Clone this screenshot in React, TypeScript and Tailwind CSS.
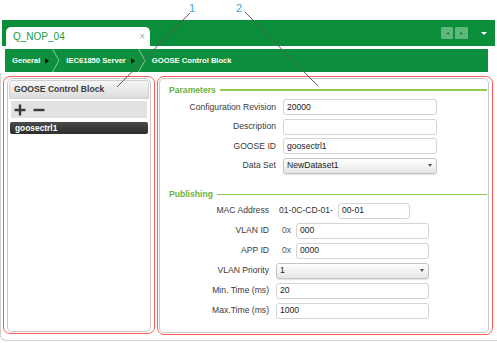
import React from 'react';

const font = "font-['Liberation_Sans',Arial,sans-serif]";

const Field: React.FC<{ value?: string; w: string }> = ({ value = '', w }) => (
  <div className={`${w} h-[16px] border border-[#d4d4d4] rounded-[3px] bg-white pl-[3px] flex items-center text-[8.6px] text-[#222]`}>
    {value}
  </div>
);

const Select: React.FC<{ value: string; w: string }> = ({ value, w }) => (
  <div className={`${w} h-[16px] border border-[#c4c4c4] rounded-[3px] bg-gradient-to-b from-white to-[#e6e6e6] pl-[3px] pr-[4px] flex items-center justify-between text-[8.6px] text-[#222] shadow-[0_1px_1px_rgba(0,0,0,0.12)]`}>
    <span>{value}</span>
    <span className="w-0 h-0 border-l-[2.5px] border-r-[2.5px] border-t-[3px] border-l-transparent border-r-transparent border-t-[#555]"></span>
  </div>
);

const Legend: React.FC<{ title: string }> = ({ title }) => (
  <div className="h-[10px] flex items-center pl-[9px] pr-[1px]">
    <span className="text-[8.6px] font-bold text-[#6bb33b]">{title}</span>
    <div className="flex-1 h-[1.5px] bg-[#8fca4f] ml-[4px]"></div>
  </div>
);

const Crumb: React.FC<{ label: string; last?: boolean }> = ({ label, last }) => (
  <div className="flex items-center h-full">
    <span className="text-[7.6px] font-bold text-white">{label}</span>
    {!last && (
      <>
        <span className="ml-[5px] w-0 h-0 border-t-[3.5px] border-b-[3.5px] border-l-[4px] border-t-transparent border-b-transparent border-l-[#111]"></span>
        <svg width="9" height="23" className="ml-[3px] mr-[5px]">
          <polyline points="0.5,0 7,11.5 0.5,23" fill="none" stroke="#7fcf93" strokeWidth="1" />
        </svg>
      </>
    )}
  </div>
);

const App: React.FC = () => {
  return (
    <div className={`relative w-[497px] h-[343px] bg-white overflow-hidden ${font}`}>
      {/* callout numbers */}
      <div className="h-[20px]"></div>

      {/* tab bar */}
      <div className="mx-[2px] h-[26px] bg-[#0a8e39] flex items-end justify-between pl-[4px] pr-[8px]">
        <div className="w-[144px] h-[19px] bg-white rounded-t-[5px] flex items-center justify-between pl-[7px] pr-[5px]">
          <span className="text-[10px] text-[#1b9a3e]">Q_NOP_04</span>
          <span className="text-[10px] text-[#aaa]">×</span>
        </div>
        <div className="self-center flex items-center gap-[2px]">
          <div className="w-[12px] h-[12px] bg-[#5fb87b] rounded-[1px] flex items-center justify-center text-[6px] text-[#2d7d44]">◂</div>
          <div className="w-[13px] h-[12px] bg-[#5fb87b] rounded-[1px] flex items-center justify-center text-[6px] text-[#2d7d44]">▸</div>
          <span className="ml-[11px] w-0 h-0 border-l-[3px] border-r-[3px] border-t-[3px] border-l-transparent border-r-transparent border-t-white"></span>
        </div>
      </div>

      {/* breadcrumb */}
      <div className="mt-[3px] ml-[5px] w-[483px] h-[23px] bg-[#0c903d] flex items-center pl-[7px]">
        <Crumb label="General" />
        <Crumb label="IEC61850 Server" />
        <Crumb label="GOOSE Control Block" last />
      </div>

      {/* main */}
      <div className="mt-[1px] h-[268px] border-l border-b border-[#d2d2d2] rounded-bl-[6px] flex gap-[2px] pt-[3px] pl-[2px]">
        {/* left panel */}
        <div className="w-[152px] h-[258px] border border-[#ff5a5a] rounded-[7px] pt-[1px] pb-[1px] px-[3px]">
          <div className="h-full border border-[#c8c8c8] rounded-[5px] p-[1px]">
            <div className="h-[19px] border border-[#d0d0d0] rounded-t-[3px] bg-gradient-to-b from-[#f7f7f7] to-[#dcdcdc] flex items-center pl-[4px]">
              <span className="text-[8.6px] font-bold text-[#3a3a3a]">GOOSE Control Block</span>
            </div>
            <div className="mt-[2px] mx-[2px] h-[17px] bg-[#e2e2e2] flex items-center pl-[3px] gap-[7px]">
              <svg width="12" height="12" viewBox="0 0 12 12"><path d="M6 0.5v11M0.5 6h11" stroke="#3a3a3a" strokeWidth="2.4" /></svg>
              <svg width="12" height="12" viewBox="0 0 12 12"><path d="M0.5 6h11" stroke="#3a3a3a" strokeWidth="2.4" /></svg>
            </div>
            <div className="mt-[4px] mx-[1px] h-[12px] bg-gradient-to-b from-[#4a4a4a] to-[#2e2e2e] rounded-[2px] flex items-center pl-[5px]">
              <span className="text-[8.4px] font-bold text-white">goosectrl1</span>
            </div>
          </div>
        </div>

        {/* right panel */}
        <div className="w-[336px] h-[259px] border border-[#ff5a5a] rounded-[7px] p-[1px] pr-[3px]">
          <div className="h-full border border-[#c8c8c8] rounded-[5px] pt-[6px] text-[8.6px] text-[#3a3a3a]">
            <Legend title="Parameters" />
            <div className="mt-[4px] flex flex-col gap-[3.5px]">
              <div className="flex items-center">
                <span className="w-[116px] text-right">Configuration Revision</span>
                <div className="ml-[7px]"><Field value="20000" w="w-[154px]" /></div>
              </div>
              <div className="flex items-center">
                <span className="w-[116px] text-right">Description</span>
                <div className="ml-[7px]"><Field w="w-[154px]" /></div>
              </div>
              <div className="flex items-center">
                <span className="w-[116px] text-right">GOOSE ID</span>
                <div className="ml-[7px]"><Field value="goosectrl1" w="w-[154px]" /></div>
              </div>
              <div className="flex items-center">
                <span className="w-[116px] text-right">Data Set</span>
                <div className="ml-[7px]"><Select value="NewDataset1" w="w-[154px]" /></div>
              </div>
            </div>

            <div className="mt-[16px]">
              <Legend title="Publishing" />
            </div>
            <div className="mt-[3px] flex flex-col gap-[4px]">
              <div className="flex items-center">
                <span className="w-[109px] text-right">MAC Address</span>
                <span className="ml-[10px] text-[#333]">01-0C-CD-01-</span>
                <div className="ml-[5px]"><Field value="00-01" w="w-[72px]" /></div>
              </div>
              <div className="flex items-center">
                <span className="w-[109px] text-right">VLAN ID</span>
                <span className="ml-[13px] w-[14px] text-[#555]">0x</span>
                <Field value="000" w="w-[133px]" />
              </div>
              <div className="flex items-center">
                <span className="w-[109px] text-right">APP ID</span>
                <span className="ml-[13px] w-[14px] text-[#555]">0x</span>
                <Field value="0000" w="w-[133px]" />
              </div>
              <div className="flex items-center">
                <span className="w-[109px] text-right">VLAN Priority</span>
                <div className="ml-[7px]"><Select value="1" w="w-[153px]" /></div>
              </div>
              <div className="flex items-center">
                <span className="w-[109px] text-right">Min. Time (ms)</span>
                <div className="ml-[7px]"><Field value="20" w="w-[153px]" /></div>
              </div>
              <div className="flex items-center">
                <span className="w-[109px] text-right">Max.Time (ms)</span>
                <div className="ml-[7px]"><Field value="1000" w="w-[153px]" /></div>
              </div>
            </div>
          </div>
        </div>
      </div>

      {/* callouts */}
      <span className="absolute left-[189px] top-[0px] text-[11px] text-[#3aa4d6]">1</span>
      <span className="absolute left-[236px] top-[0px] text-[11px] text-[#3aa4d6]">2</span>
      <svg className="absolute left-0 top-0 pointer-events-none" width="497" height="343">
        <line x1="190" y1="13" x2="117" y2="87" stroke="#5a5a5a" strokeWidth="1" />
        <line x1="245" y1="12" x2="318" y2="86" stroke="#5a5a5a" strokeWidth="1" />
      </svg>
    </div>
  );
};

export default App;
